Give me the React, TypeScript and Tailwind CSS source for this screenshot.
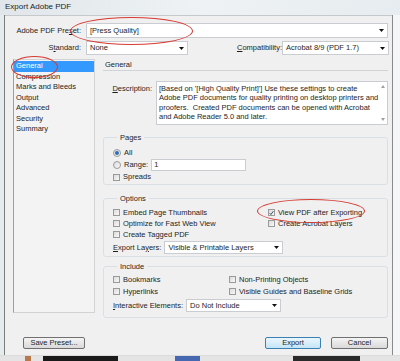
import React from 'react';

function Arrow() {
  return (
    <svg width="5" height="3" viewBox="0 0 5 3" className="shrink-0">
      <path d="M0 0h5L2.5 3z" fill="#111" />
    </svg>
  );
}

function Select({ value, className }: { value: string; className: string }) {
  return (
    <div className={`flex items-center justify-between bg-white border border-[#c9ccd1] pl-[3px] pr-[3px] ${className}`}>
      <span>{value}</span>
      <Arrow />
    </div>
  );
}

function Check({ label, checked = false }: { label: React.ReactNode; checked?: boolean }) {
  return (
    <div className="flex items-center gap-[3px] h-[11px]">
      <span className="w-[7px] h-[7px] border border-[#9a9a9a] bg-gradient-to-br from-[#dcdcdc] to-[#f8f8f8] flex items-center justify-center">
        {checked && (
          <svg width="6" height="6" viewBox="0 0 6 6">
            <path d="M0.8 3.2 2.3 4.8 5.3 0.8" stroke="#1b2b4a" strokeWidth="1" fill="none" />
          </svg>
        )}
      </span>
      <span>{label}</span>
    </div>
  );
}

function Radio({ label, checked = false }: { label: string; checked?: boolean }) {
  return (
    <div className="flex items-center gap-[3px] h-[12px]">
      <span className="w-[8px] h-[8px] rounded-full border border-[#9a9a9a] bg-gradient-to-br from-[#dcdcdc] to-[#fafafa] flex items-center justify-center">
        {checked && <span className="w-[4px] h-[4px] rounded-full bg-[#2b6fb6]" />}
      </span>
      <span>{label}</span>
    </div>
  );
}

function Group({ title, className, children }: { title: string; className: string; children: React.ReactNode }) {
  return (
    <fieldset className={`border border-[#d9e0e5] rounded-[3px] ${className}`}>
      <legend className="ml-[4px] px-[3px] leading-[9px]">{title}</legend>
      {children}
    </fieldset>
  );
}

function U({ c }: { c: string }) {
  return <span className="underline underline-offset-1">{c}</span>;
}

const pages = ['General', 'Compression', 'Marks and Bleeds', 'Output', 'Advanced', 'Security', 'Summary'];

export default function App() {
  return (
    <div className="relative w-[400px] h-[361px] overflow-hidden bg-[#eef2f3] text-[7.5px] leading-[10px] text-[#1e1e1e] font-['Liberation_Sans',Tahoma,sans-serif]">
      {/* title bar */}
      <div className="h-[15px] pl-[5px] pt-[2px] text-[8px] bg-gradient-to-r from-[#e0e6ea] via-[#eef2f4] to-[#e6ecef]">
        Export Adobe PDF
      </div>

      <div className="flex h-[340px]">
        <div className="w-[5px] border-r border-[#7d7d7d] bg-[#e6ebee]" />
        <div className="w-[387px] bg-[#f0f0f0] border-t border-[#c5c9cc] flex flex-col">
          {/* preset */}
          <div className="flex items-center mt-[7px] h-[15px]">
            <span className="w-[78px] text-right pr-[2px]">Adobe PDF Pre<U c="s" />et:</span>
            <Select value="[Press Quality]" className="ml-[3px] w-[302px] h-[15px]" />
          </div>
          {/* standard / compat */}
          <div className="flex items-center mt-[3px] h-[14px]">
            <span className="w-[78px] text-right pr-[2px]">S<U c="t" />andard:</span>
            <Select value="None" className="ml-[3px] w-[102px] h-[14px]" />
            <span className="ml-[49px] w-[44px] text-right pr-[1px]"><U c="C" />ompatibility:</span>
            <Select value="Acrobat 8/9 (PDF 1.7)" className="ml-[1px] w-[107px] h-[14px]" />
          </div>

          <div className="flex mt-[4px]">
            {/* left list */}
            <div className="ml-[8px] w-[82px] h-[254px] bg-[#f3f3f3] border border-[#d2d2d2] border-l-[#9d9d9d] pt-[1px]">
              {pages.map((p, i) => (
                <div
                  key={p}
                  className={`h-[10.5px] pl-[2px] leading-[10.5px] ${i === 0 ? 'bg-[#3399ff] text-white' : ''}`}
                >
                  {p}
                </div>
              ))}
            </div>

            {/* right panel */}
            <div className="ml-[8px] w-[285px] flex flex-col">
              <div className="h-[12px] pl-[2px] pt-[1px] border-b border-[#cfd3d6]">General</div>
              <div className="flex mt-[10px]">
                <span className="w-[49px] text-right pt-[3px]"><U c="D" />escription:</span>
                <div className="ml-[4px] w-[232px] h-[44px] bg-white border border-[#c9ccd1] flex">
                  <div className="flex-1 pl-[2px] pt-[2px] leading-[9.3px]">
                    [Based on '[High Quality Print]'] Use these settings to create Adobe PDF documents for quality printing on desktop printers and proofers.&nbsp; Created PDF documents can be opened with Acrobat and Adobe Reader 5.0 and later.
                  </div>
                  <div className="w-[8px] flex flex-col items-center justify-between py-[3px]">
                    <svg width="4" height="3" viewBox="0 0 4 3"><path d="M0 3h4L2 0z" fill="#a0a0a0" /></svg>
                    <svg width="4" height="3" viewBox="0 0 4 3"><path d="M0 0h4L2 3z" fill="#a0a0a0" /></svg>
                  </div>
                </div>
              </div>

              <Group title="Pages" className="mt-[8px] h-[52px] pl-[9px] pt-[5px]">
                <div className="flex flex-col">
                  <Radio label="All" checked />
                  <div className="flex items-center h-[12px]">
                    <Radio label="Range:" />
                    <div className="ml-[3px] w-[95px] h-[12px] bg-white border border-[#c9ccd1] pl-[2px] leading-[10px]">1</div>
                  </div>
                  <div className="h-[12px] flex items-center">
                    <Check label="Spreads" />
                  </div>
                </div>
              </Group>

              <Group title="Options" className="mt-[9px] h-[63px] pl-[9px] pt-[4px]">
                <div className="flex">
                  <div className="w-[155px] flex flex-col">
                    <Check label="Embed Page Thumbnails" />
                    <Check label="Optimize for Fast Web View" />
                    <Check label="Create Tagged PDF" />
                  </div>
                  <div className="flex flex-col">
                    <Check label="View PDF after Exporting" checked />
                    <Check label="Create Acrobat Layers" />
                  </div>
                </div>
                <div className="flex items-center mt-[1px]">
                  <span><U c="E" />xport La<U c="y" />ers:</span>
                  <Select value="Visible & Printable Layers" className="ml-[3px] w-[119px] h-[13px]" />
                </div>
              </Group>

              <Group title="Include" className="mt-[5px] h-[56px] pl-[9px] pt-[3px]">
                <div className="flex">
                  <div className="w-[116px] flex flex-col gap-[1px]">
                    <Check label="Bookmarks" />
                    <Check label="Hyperlinks" />
                  </div>
                  <div className="flex flex-col gap-[1px]">
                    <Check label="Non-Printing Objects" />
                    <Check label="Visible Guides and Baseline Grids" />
                  </div>
                </div>
                <div className="flex items-center mt-[2px]">
                  <span><U c="I" />nteractive Elements:</span>
                  <Select value="Do Not Include" className="ml-[3px] w-[95px] h-[13px]" />
                </div>
              </Group>
            </div>
          </div>

          {/* buttons */}
          <div className="flex items-center mt-[auto] mb-[6px] h-[12px]">
            <button className="ml-[18px] w-[62px] h-[12px] rounded-[2px] border border-[#707070] bg-gradient-to-b from-[#f4f4f4] to-[#d9d9d9] leading-[10px]">Save Preset...</button>
            <button className="ml-[180px] w-[56px] h-[12px] rounded-[2px] border border-[#3c7fb1] bg-gradient-to-b from-[#eaf6fd] to-[#c4e5f6] leading-[10px]">Export</button>
            <button className="ml-[10px] w-[57px] h-[12px] rounded-[2px] border border-[#707070] bg-gradient-to-b from-[#f4f4f4] to-[#d9d9d9] leading-[10px]">Cancel</button>
          </div>
        </div>
        <div className="w-[1px] bg-[#8a8a8a]" />
        <div className="flex-1 bg-[#f4f6f7]" />
      </div>

      {/* desktop strip */}
      <div className="flex h-[6px] border-t border-[#dcdcdc] bg-[#e4e4e4]">
        <div className="ml-[25px] w-[6px] bg-[#b8784a]" />
        <div className="ml-[12px] w-[75px] bg-[#1a1a1a]" />
        <div className="ml-[57px] w-[25px] bg-[#4668b0]" />
        <div className="ml-[93px] w-[67px] bg-[#2a2a2a]" />
      </div>

      {/* red annotation ellipses */}
      <div className="absolute left-[70px] top-[17px] w-[123px] h-[28px] rounded-[50%] border-[1.5px] border-[#d63a32]" />
      <div className="absolute left-[11px] top-[56px] w-[47px] h-[22px] rounded-[50%] border-[1.5px] border-[#d63a32]" />
      <div className="absolute left-[257px] top-[199px] w-[108px] h-[24px] rounded-[50%] border-[1.5px] border-[#d63a32]" />
    </div>
  );
}
